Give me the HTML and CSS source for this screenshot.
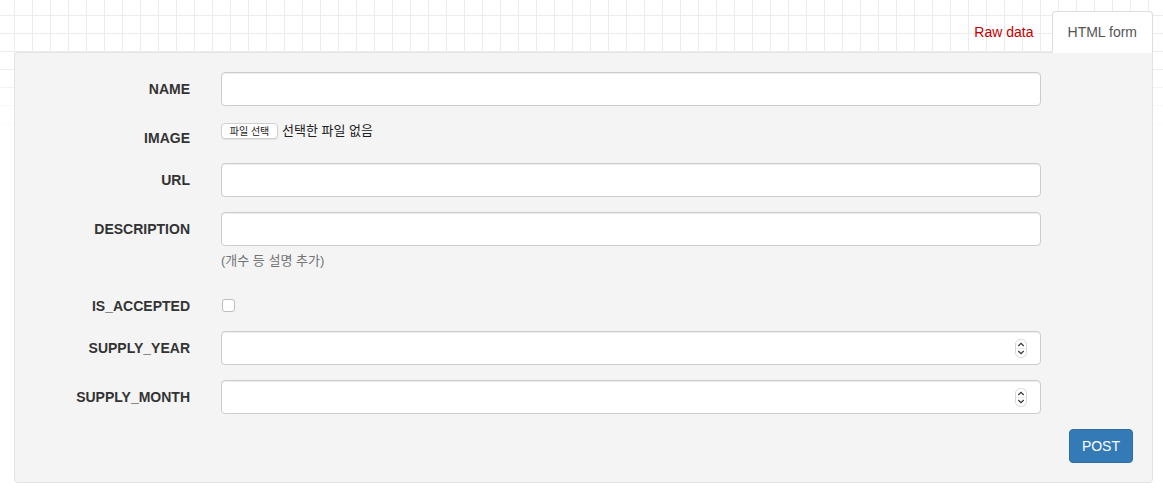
FILE: index.html
```html
<!DOCTYPE html>
<html lang="ko">
<head>
<meta charset="utf-8">
<title>HTML form</title>
<link rel="stylesheet" href="styles.css">
</head>
<body>
<div class="page">
  <ul class="tabs">
    <li class="tab"><a class="tab-link" href="#">Raw data</a></li>
    <li class="tab tab-active"><a class="tab-link" href="#">HTML form</a></li>
  </ul>
  <div class="well">
    <form class="form">
      <div class="row">
        <label class="lbl">NAME</label>
        <div class="ctl"><input class="input" type="text"></div>
      </div>
      <div class="row">
        <label class="lbl">IMAGE</label>
        <div class="ctl file">
          <span class="file-btn">파일 선택</span><span class="file-text">선택한 파일 없음</span>
        </div>
      </div>
      <div class="row">
        <label class="lbl">URL</label>
        <div class="ctl"><input class="input" type="text"></div>
      </div>
      <div class="row row-help">
        <label class="lbl">DESCRIPTION</label>
        <div class="ctl">
          <input class="input" type="text">
          <p class="help">(개수 등 설명 추가)</p>
        </div>
      </div>
      <div class="row">
        <label class="lbl">IS_ACCEPTED</label>
        <div class="ctl"><span class="checkbox"></span></div>
      </div>
      <div class="row">
        <label class="lbl">SUPPLY_YEAR</label>
        <div class="ctl num">
          <input class="input" type="number">
          <svg class="spin" width="12" height="19" viewBox="0 0 12 19"><rect x="0.5" y="0.5" width="11" height="18" rx="5" fill="#fff" stroke="#d6d6d6"/><line x1="1" y1="9.5" x2="11" y2="9.5" stroke="#eee"/><path d="M3.3 7 L6 4.3 L8.7 7" fill="none" stroke="#333" stroke-width="1.2"/><path d="M3.3 12 L6 14.7 L8.7 12" fill="none" stroke="#333" stroke-width="1.2"/></svg>
        </div>
      </div>
      <div class="row">
        <label class="lbl">SUPPLY_MONTH</label>
        <div class="ctl num">
          <input class="input" type="number">
          <svg class="spin" width="12" height="19" viewBox="0 0 12 19"><rect x="0.5" y="0.5" width="11" height="18" rx="5" fill="#fff" stroke="#d6d6d6"/><line x1="1" y1="9.5" x2="11" y2="9.5" stroke="#eee"/><path d="M3.3 7 L6 4.3 L8.7 7" fill="none" stroke="#333" stroke-width="1.2"/><path d="M3.3 12 L6 14.7 L8.7 12" fill="none" stroke="#333" stroke-width="1.2"/></svg>
        </div>
      </div>
      <div class="actions">
        <button class="btn" type="button">POST</button>
      </div>
    </form>
  </div>
</div>
</body>
</html>
```
FILE: styles.css
```css
html, body {
  margin: 0;
  padding: 0;
  min-height: 100%;
}
body {
  font-family: "Liberation Sans", Arial, "Noto Sans CJK KR", sans-serif;
  font-size: 14px;
  line-height: 20px;
  color: #333;
  background-color: #fff;
  background-image:
    linear-gradient(to bottom, rgba(255,255,255,0) 0, rgba(255,255,255,0) 55px, rgba(255,255,255,1) 135px),
    repeating-linear-gradient(to right, #ececec 0 1px, transparent 1px 18px),
    repeating-linear-gradient(to bottom, #ececec 0 1px, transparent 1px 18px);
  background-size: 100% 140px, 100% 140px, 100% 140px;
  background-position: 0 0, 14px -3px, 0 -3px;
  background-repeat: no-repeat;
}
.page {
  padding: 11px 10px 0 14px;
}
.tabs {
  list-style: none;
  margin: 0;
  padding: 0;
  display: flex;
  justify-content: flex-end;
  margin-bottom: -1px;
  position: relative;
  z-index: 1;
}
.tab {
  margin-left: 2px;
}
.tab-link {
  display: block;
  padding: 10px 15px;
  border: 1px solid transparent;
  border-radius: 4px 4px 0 0;
  color: #c20000;
  text-decoration: none;
}
.tab-active .tab-link {
  color: #555;
  background: #fff;
  border-color: #ddd #ddd transparent;
}
.well {
  background: #f4f4f4;
  border: 1px solid #e3e3e3;
  border-radius: 4px 0 4px 4px;
  padding: 19px;
}
.form {
  margin: 0;
}
.row {
  display: grid;
  grid-template-columns: 156px 820px;
  column-gap: 31px;
  margin-bottom: 15px;
}
.lbl {
  text-align: right;
  font-weight: bold;
  padding-top: 7px;
  color: #333;
}
.ctl {
  position: relative;
}
.input {
  display: block;
  box-sizing: border-box;
  width: 100%;
  height: 34px;
  padding: 6px 12px;
  font: inherit;
  color: #555;
  background: #fff;
  border: 1px solid #ccc;
  border-radius: 4px;
  box-shadow: inset 0 1px 1px rgba(0,0,0,.075);
  margin: 0;
  -moz-appearance: textfield;
}
.input::-webkit-inner-spin-button,
.input::-webkit-outer-spin-button {
  -webkit-appearance: none;
  margin: 0;
}
.file {
  display: flex;
  align-items: center;
  align-self: start;
  height: 16px;
  margin-top: 2px;
}
.file-btn {
  box-sizing: border-box;
  height: 16px;
  width: 57px;
  display: inline-flex;
  align-items: center;
  justify-content: center;
  font-family: "Noto Sans CJK KR", sans-serif;
  font-size: 10px;
  line-height: 14px;
  color: #222;
  background: #fff;
  border: 1px solid #d0d0d0;
  border-radius: 4px;
  box-shadow: 0 1px 1px rgba(0,0,0,.08);
}
.file-text {
  margin-left: 4px;
  font-family: "Noto Sans CJK KR", sans-serif;
  font-size: 13px;
  color: #222;
  position: relative;
  top: -1px;
}
.help {
  margin: 5px 0 3px;
  color: #737373;
  font-family: "Liberation Sans", "Noto Sans CJK KR", sans-serif;
  font-size: 13px;
  line-height: 20px;
}
.checkbox {
  display: block;
  box-sizing: border-box;
  width: 13px;
  height: 13px;
  margin: 10px 0 0 1px;
  background: #fff;
  border: 1px solid #bdbdbd;
  border-radius: 3px;
}
.spin {
  position: absolute;
  right: 14px;
  top: 8px;
}
.actions {
  display: flex;
  justify-content: flex-end;
}
.btn {
  font-family: "Liberation Sans", Arial, sans-serif;
  font-size: 14px;
  line-height: 20px;
  padding: 6px 12px;
  color: #fff;
  background: #337ab7;
  border: 1px solid #2e6da4;
  border-radius: 4px;
  cursor: pointer;
}
```
